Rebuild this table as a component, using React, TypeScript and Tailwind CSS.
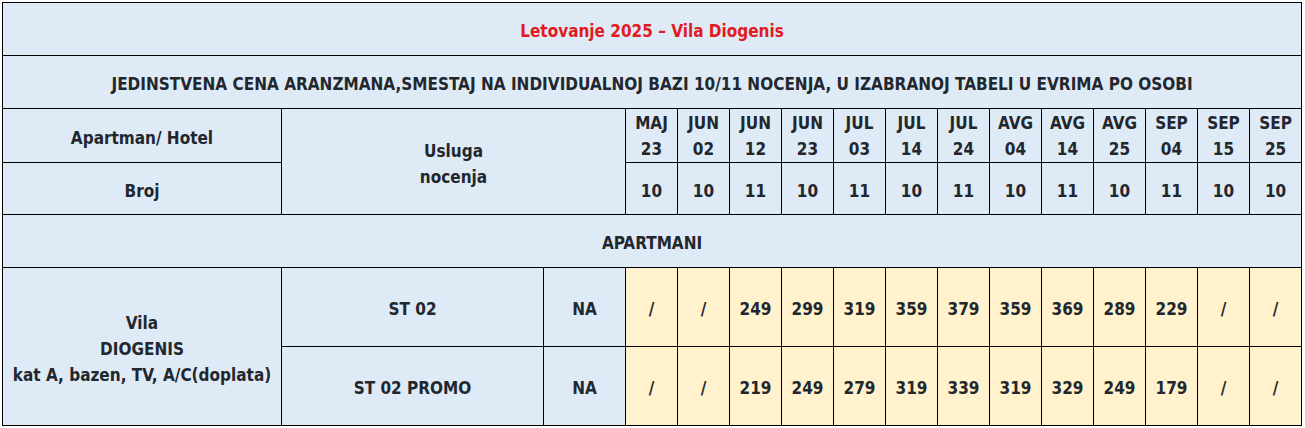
const dates = [
  { m: "MAJ", d: "23", n: 10 },
  { m: "JUN", d: "02", n: 10 },
  { m: "JUN", d: "12", n: 11 },
  { m: "JUN", d: "23", n: 10 },
  { m: "JUL", d: "03", n: 11 },
  { m: "JUL", d: "14", n: 10 },
  { m: "JUL", d: "24", n: 11 },
  { m: "AVG", d: "04", n: 10 },
  { m: "AVG", d: "14", n: 11 },
  { m: "AVG", d: "25", n: 10 },
  { m: "SEP", d: "04", n: 11 },
  { m: "SEP", d: "15", n: 10 },
  { m: "SEP", d: "25", n: 10 },
];

const rows = [
  { name: "ST 02", prices: ["/", "/", "249", "299", "319", "359", "379", "359", "369", "289", "229", "/", "/"] },
  { name: "ST 02 PROMO", prices: ["/", "/", "219", "249", "279", "319", "339", "319", "329", "249", "179", "/", "/"] },
];

const cell = "border border-black bg-[#deeaf6] text-center align-middle px-0 pb-0 pt-[4px]";
const dateCell = "border border-black bg-[#deeaf6] text-center align-middle p-0";
const price = "border border-black bg-[#fff2cc] text-center align-middle px-0 pb-0 pt-[4px]";

export default function App() {
  return (
    <div className="bg-white pl-[2px] pt-[2px]">
      <table
        className="w-[1300px] table-fixed border-collapse text-[17px] font-bold leading-[26px] text-[#22272e]"
        style={{ fontFamily: '"DejaVu Sans Condensed", "DejaVu Sans", sans-serif' }}
      >
        <colgroup>
          <col className="w-[279px]" />
          <col className="w-[262px]" />
          <col className="w-[82px]" />
          {dates.map((_, i) => (
            <col key={i} className="w-[52px]" />
          ))}
        </colgroup>
        <tbody>
          <tr className="h-[53px]">
            <td colSpan={16} className={`${cell} text-[#e01b22]`}>
              Letovanje 2025 – Vila Diogenis
            </td>
          </tr>
          <tr className="h-[53px]">
            <td colSpan={16} className={cell}>
              JEDINSTVENA CENA ARANZMANA,SMESTAJ NA INDIVIDUALNOJ BAZI 10/11 NOCENJA, U IZABRANOJ TABELI U EVRIMA PO OSOBI
            </td>
          </tr>
          <tr className="h-[54px]">
            <td className={cell}>Apartman/ Hotel</td>
            <td colSpan={2} rowSpan={2} className={cell}>
              Usluga
              <br />
              nocenja
            </td>
            {dates.map((d, i) => (
              <td key={i} className={dateCell}>
                {d.m}
                <br />
                {d.d}
              </td>
            ))}
          </tr>
          <tr className="h-[52px]">
            <td className={cell}>Broj</td>
            {dates.map((d, i) => (
              <td key={i} className={cell}>
                {d.n}
              </td>
            ))}
          </tr>
          <tr className="h-[53px]">
            <td colSpan={16} className={cell}>
              APARTMANI
            </td>
          </tr>
          {rows.map((r, ri) => (
            <tr key={r.name} className="h-[79px]">
              {ri === 0 && (
                <td rowSpan={2} className={`${cell} whitespace-nowrap`}>
                  Vila
                  <br />
                  DIOGENIS
                  <br />
                  kat A, bazen, TV, A/C(doplata)
                </td>
              )}
              <td className={cell}>{r.name}</td>
              <td className={cell}>NA</td>
              {r.prices.map((p, i) => (
                <td key={i} className={price}>
                  {p}
                </td>
              ))}
            </tr>
          ))}
        </tbody>
      </table>
    </div>
  );
}
